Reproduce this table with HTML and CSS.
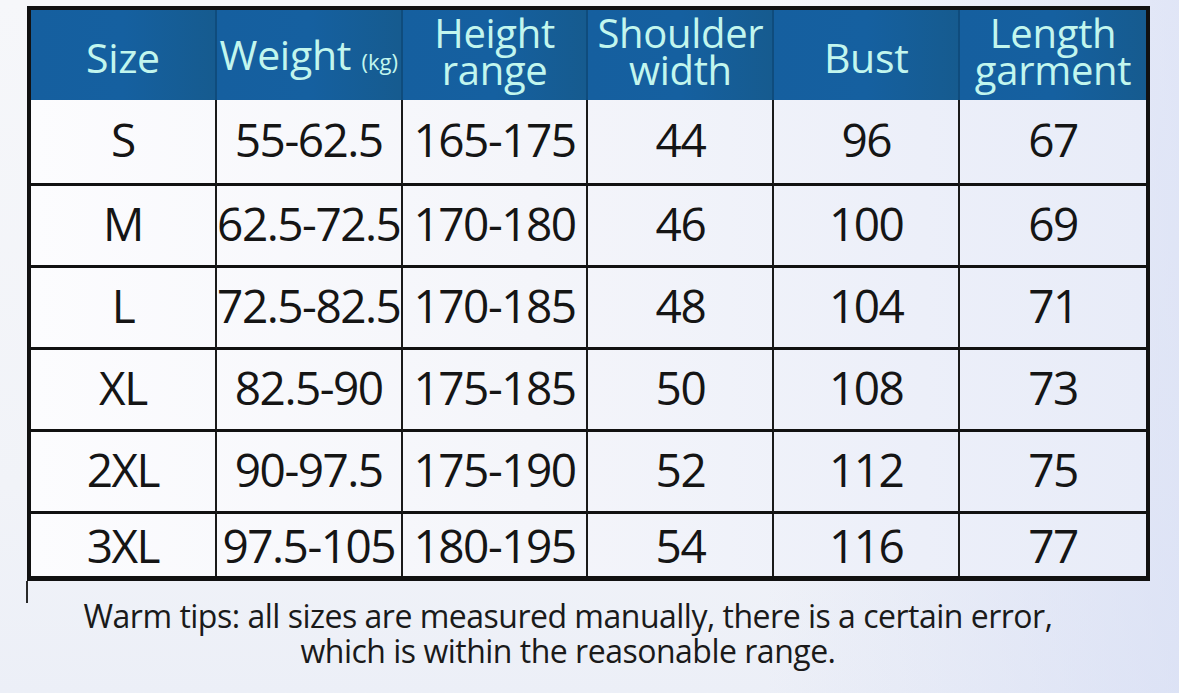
FILE: index.html
```html
<!DOCTYPE html>
<html lang="en">
<head>
<meta charset="utf-8">
<title>Size chart</title>
<link rel="stylesheet" href="styles.css">
</head>
<body>
<main class="page">
  <table class="chart">
    <colgroup>
      <col><col><col><col><col><col>
    </colgroup>
    <thead>
      <tr>
        <th class="single">Size</th>
        <th class="single">Weight <small>(kg)</small></th>
        <th><span class="ln">Height</span><span class="ln">range</span></th>
        <th><span class="ln">Shoulder</span><span class="ln">width</span></th>
        <th class="single">Bust</th>
        <th><span class="ln">Length</span><span class="ln">garment</span></th>
      </tr>
    </thead>
    <tbody>
      <tr class="first"><td>S</td><td>55-62.5</td><td>165-175</td><td>44</td><td>96</td><td>67</td></tr>
      <tr><td>M</td><td>62.5-72.5</td><td>170-180</td><td>46</td><td>100</td><td>69</td></tr>
      <tr><td>L</td><td>72.5-82.5</td><td>170-185</td><td>48</td><td>104</td><td>71</td></tr>
      <tr><td>XL</td><td>82.5-90</td><td>175-185</td><td>50</td><td>108</td><td>73</td></tr>
      <tr><td>2XL</td><td>90-97.5</td><td>175-190</td><td>52</td><td>112</td><td>75</td></tr>
      <tr class="last"><td>3XL</td><td>97.5-105</td><td>180-195</td><td>54</td><td>116</td><td>77</td></tr>
    </tbody>
  </table>
  <div class="tail"></div>
  <p class="note">Warm tips: all sizes are measured manually, there is a certain error,<br>which is within the reasonable range.</p>
</main>
</body>
</html>
```
FILE: styles.css
```css
html, body {
  margin: 0;
  padding: 0;
}

body {
  width: 1179px;
  height: 693px;
  overflow: hidden;
  font-family: "Open Sans", "Noto Sans", sans-serif;
  color: #151515;
  background:
    linear-gradient(90deg, rgba(255,255,255,0) 0%, rgba(255,255,255,0) 65%, rgba(210,218,244,0.6) 100%),
    linear-gradient(180deg, #f6f7fa 0%, #f1f3f8 70%, #eceff7 100%);
}

.page {
  padding-top: 6px;
  padding-left: 27px;
}

.chart {
  width: 1123px;
  table-layout: fixed;
  border-collapse: separate;
  border-spacing: 0;
  border: 4px solid #111;
  border-bottom-width: 5px;
  background: linear-gradient(90deg, #fcfcfe 0%, #f4f5fa 45%, #eceff9 80%, #e8ecf8 100%);
}

.chart th {
  height: 90px;
  padding: 0 0 8px;
  box-sizing: border-box;
  background: linear-gradient(90deg, #155f9f 0%, #1560a0 50%, #165b8f 100%);
  color: #c2f6ee;
  font-weight: 400;
  font-size: 40px;
  line-height: 37px;
  letter-spacing: -0.3px;
  text-align: center;
  vertical-align: middle;
  border-right: 2px solid #0f4c7d;
}

.chart th .ln {
  display: block;
  height: 37px;
  overflow: visible;
}

.chart th.single {
  padding: 5px 0 0;
  font-size: 41px;
}

.chart th:last-child,
.chart td:last-child {
  border-right: 0;
}

.chart th small {
  font-size: 22px;
  letter-spacing: 0;
}

.chart td {
  height: 82px;
  box-sizing: border-box;
  padding: 0 0 6px;
  text-align: center;
  vertical-align: middle;
  font-size: 46px;
  letter-spacing: -1.5px;
  line-height: 50px;
  white-space: nowrap;
  border-right: 2px solid #1a1a1a;
  border-bottom: 3px solid #111;
}

.chart tr.first td {
  height: 86px;
}

.chart tr.last td {
  height: 62px;
  border-bottom: 0;
  padding-bottom: 0;
}

.tail {
  width: 2px;
  height: 22px;
  background: #2a2a2a;
  margin-left: -1px;
}

.note {
  margin: -5px 0 0 -27px;
  padding-right: 43px;
  text-align: center;
  font-size: 32px;
  line-height: 35px;
  letter-spacing: -0.5px;
  color: #1a1a1a;
}
```
